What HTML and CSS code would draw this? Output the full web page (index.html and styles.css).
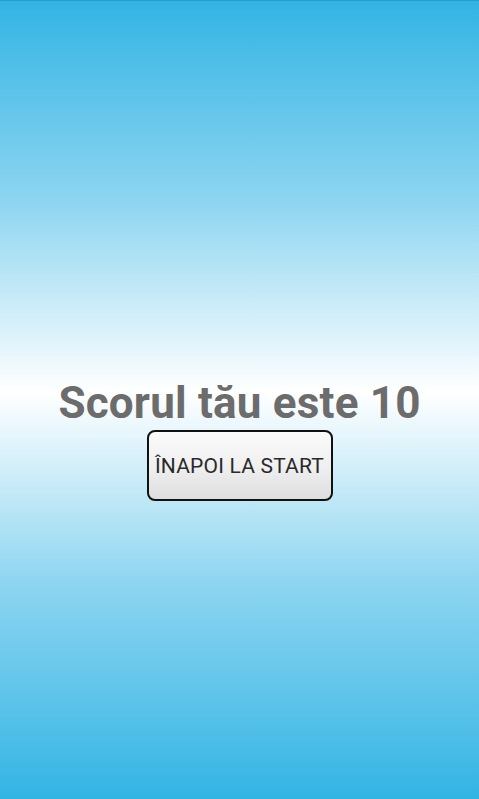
FILE: index.html
```html
<!DOCTYPE html>
<html lang="ro">
<head>
<meta charset="utf-8">
<link rel="stylesheet" href="styles.css">
</head>
<body>
<main class="screen">
  <h1 class="score">Scorul tău este 10</h1>
  <button class="back-btn">ÎNAPOI LA START</button>
</main>
</body>
</html>
```
FILE: styles.css
```css
html, body {
  margin: 0;
  padding: 0;
}
body {
  width: 479px;
  height: 799px;
  overflow: hidden;
  font-family: Roboto, "Noto Sans", sans-serif;
}
.screen {
  box-sizing: border-box;
  height: 799px;
  border-top: 1px solid #2a9ccb;
  background: linear-gradient(to bottom,
    #33b4e4 0%,
    #8dd5f0 25%,
    #ffffff 49%,
    #8dd5f0 73%,
    #33b4e4 100%);
  display: flex;
  flex-direction: column;
  align-items: center;
  padding-top: 376px;
}
.score {
  margin: 0;
  font-size: 44px;
  line-height: 52px;
  font-weight: 700;
  color: #6c6c6c;
  letter-spacing: 0.2px;
}
.back-btn {
  margin-top: 1px;
  width: 186px;
  height: 71px;
  border: 2px solid #111;
  border-radius: 8px;
  background: linear-gradient(to bottom, #fafafa 0%, #f0f0f0 50%, #dedede 100%);
  font-family: Roboto, "Noto Sans", sans-serif;
  font-size: 21px;
  letter-spacing: 0.2px;
  color: #2a2a2a;
  padding: 0;
}
```
